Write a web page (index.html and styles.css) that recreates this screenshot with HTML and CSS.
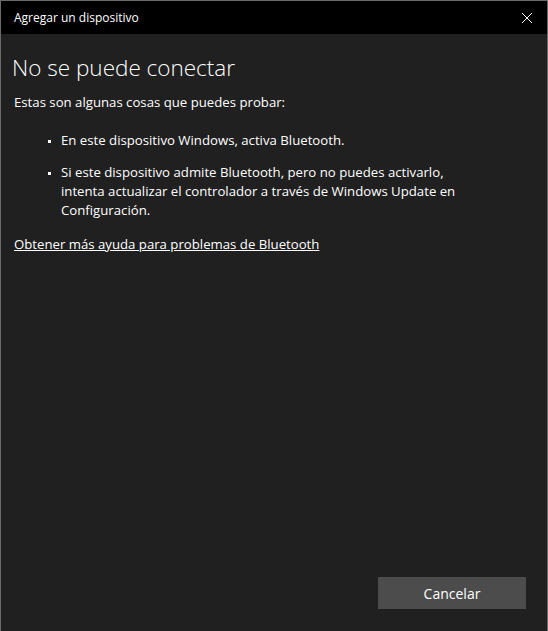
FILE: index.html
```html
<!DOCTYPE html>
<html lang="es">
<head>
<meta charset="utf-8">
<title>Agregar un dispositivo</title>
<link rel="stylesheet" href="styles.css">
</head>
<body>
<div class="window">
  <div class="titlebar">
    <span class="title">Agregar un dispositivo</span>
    <svg class="close" width="12" height="12" viewBox="0 0 12 12"><path d="M1 1 L11 11 M11 1 L1 11" stroke="#fff" stroke-width="1" fill="none"/></svg>
  </div>
  <div class="content">
    <h1 class="heading">No se puede conectar</h1>
    <p class="intro">Estas son algunas cosas que puedes probar:</p>
    <ul class="tips">
      <li>En este dispositivo Windows, activa Bluetooth.</li>
      <li>Si este dispositivo admite Bluetooth, pero no puedes activarlo, intenta actualizar el controlador a través de Windows Update en Configuración.</li>
    </ul>
    <a class="help" href="#">Obtener más ayuda para problemas de Bluetooth</a>
    <div class="spacer"></div>
    <div class="footer">
      <button class="btn">Cancelar</button>
    </div>
  </div>
</div>
</body>
</html>
```
FILE: styles.css
```css
html, body {
  margin: 0;
  padding: 0;
  height: 100%;
  background: #202020;
}
body {
  font-family: "Open Sans", "Noto Sans", sans-serif;
  color: #ffffff;
}
.window {
  box-sizing: border-box;
  height: 631px;
  border: 1px solid #6b6b6b;
  border-bottom: none;
  display: flex;
  flex-direction: column;
  background: #202020;
}
.titlebar {
  height: 33px;
  background: #000000;
  display: flex;
  align-items: center;
  justify-content: space-between;
  padding: 0 14px 0 13px;
  flex: none;
}
.title {
  font-size: 12px;
}
.close {
  display: block;
}
.content {
  flex: 1;
  display: flex;
  flex-direction: column;
  padding: 0 21px 22px 11px;
}
.heading {
  margin: 19px 0 0 0;
  font-size: 22.5px;
  font-weight: 300;
  line-height: 30px;
}
.intro {
  margin: 10px 0 0 2px;
  font-size: 13.2px;
  line-height: 19px;
}
.tips {
  margin: 19px 0 0 0;
  padding: 0 0 0 49px;
  list-style: none;
  font-size: 13.2px;
  line-height: 19px;
  max-width: 420px;
}
.tips li {
  position: relative;
  margin-bottom: 13px;
}
.tips li::before {
  content: "";
  position: absolute;
  left: -13px;
  top: 9px;
  width: 3px;
  height: 3px;
  background: #ffffff;
}
.help {
  margin: 2px 0 0 2px;
  font-size: 13.2px;
  line-height: 19px;
  color: #ffffff;
  text-decoration: underline;
  align-self: flex-start;
}
.spacer {
  flex: 1;
}
.footer {
  display: flex;
  justify-content: flex-end;
}
.btn {
  width: 148px;
  height: 32px;
  background: #4c4c4c;
  border: none;
  color: #ffffff;
  font-family: inherit;
  font-size: 14px;
  padding: 0;
}
```
